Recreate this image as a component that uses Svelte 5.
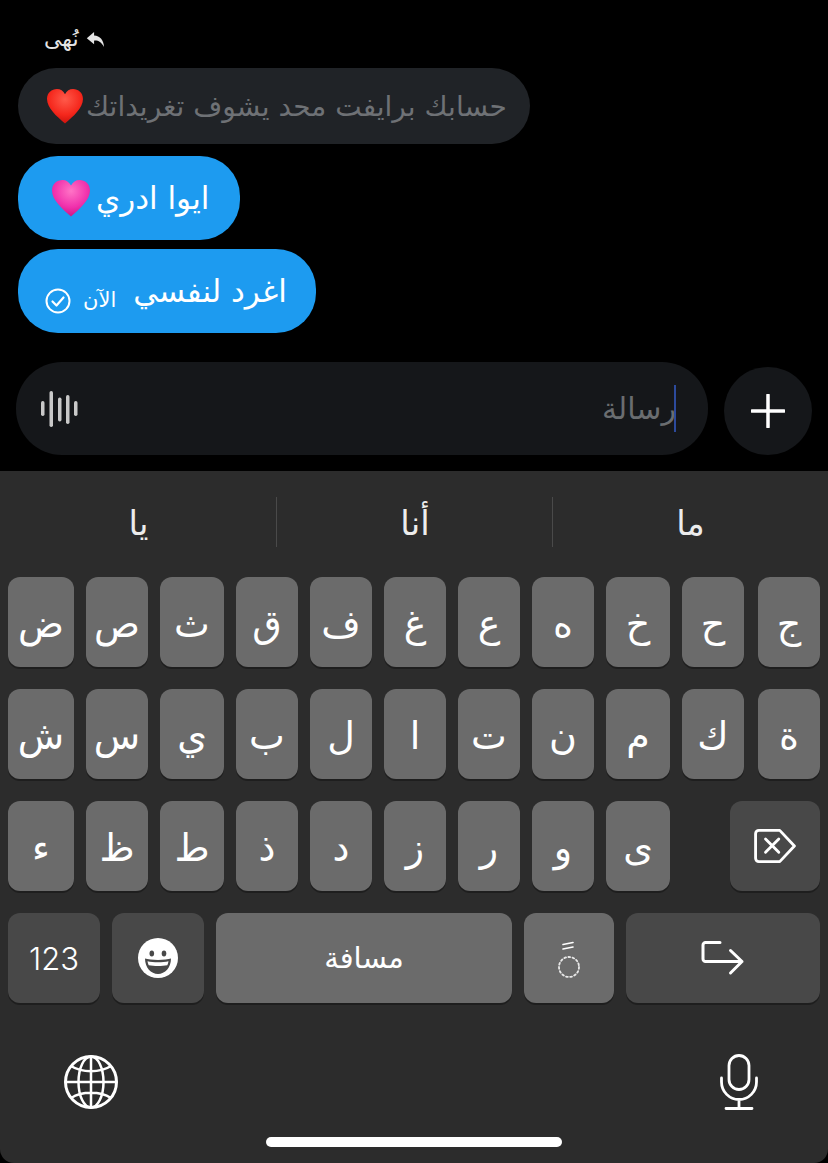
<script>
  const rows = [
    ['ض','ص','ث','ق','ف','غ','ع','ه','خ','ح','ج'],
    ['ش','س','ي','ب','ل','ا','ت','ن','م','ك','ة'],
    ['ء','ظ','ط','ذ','د','ز','ر','و','ى']
  ];
  const suggestions = ['يا','أنا','ما'];
  const heart = 'M20 37.500C11 29.500 1 21 1 11.500 1 5 6 1 11.500 1c3.700 0 6.700 2 8.500 5.500 1.800-3.500 4.800-5.500 8.500-5.500C34 1 39 5 39 11.500 39 21 29 29.500 20 37.500Z';
</script>

<div class="screen">
  <main class="chat">
    <div class="reply-head">
      <span class="reply-name" dir="rtl">نُهى</span>
      <svg class="reply-icon" viewBox="0 0 20 18" width="19" height="17"><path d="M8.500 1 0.800 7.600 8.500 14V10.200c4.500-.3 7.400 1.200 10.500 6.800C18.800 9.600 14.800 4.900 8.500 4.700Z" fill="#e4e4e4"/></svg>
    </div>
    <div class="bubble quoted">
      <svg class="heart" viewBox="0 0 40 38" width="38" height="36">
        <defs><radialGradient id="red" cx="0.5" cy="0.3" r="0.75"><stop offset="0" stop-color="#ff5a4a"/><stop offset="0.6" stop-color="#f5271c"/><stop offset="1" stop-color="#c40e0a"/></radialGradient></defs>
        <path d={heart} fill="url(#red)"/>
      </svg>
      <span dir="rtl">حسابك برايفت محد يشوف تغريداتك</span>
    </div>
    <div class="bubble blue second">
      <svg class="heart" viewBox="0 0 40 38" width="40" height="38">
        <defs><radialGradient id="pink" cx="0.5" cy="0.3" r="0.75"><stop offset="0" stop-color="#ff74c6"/><stop offset="0.6" stop-color="#f030ac"/><stop offset="1" stop-color="#c80f7c"/></radialGradient></defs>
        <path d={heart} fill="url(#pink)"/>
      </svg>
      <span dir="rtl">ايوا ادري</span>
    </div>
    <div class="bubble blue third">
      <svg class="check" viewBox="0 0 26 26" width="26" height="26"><circle cx="13" cy="13" r="11.500" fill="none" stroke="#fff" stroke-width="2"/><path d="M7.500 13.500 11.500 17.500 18.500 9.500" fill="none" stroke="#fff" stroke-width="2.200" stroke-linecap="round" stroke-linejoin="round"/></svg>
      <span class="time" dir="rtl">الآن</span>
      <span dir="rtl">اغرد لنفسي</span>
    </div>
  </main>

  <div class="composer">
    <div class="input">
      <svg class="wave" viewBox="0 0 37 36" width="37" height="36"><g fill="#c9c9c9"><rect x="0" y="10" width="3.500" height="15" rx="1.700"/><rect x="8.500" y="0" width="3.500" height="36" rx="1.700"/><rect x="17" y="6.500" width="3.500" height="24" rx="1.700"/><rect x="25" y="4" width="3.500" height="29" rx="1.700"/><rect x="33" y="10" width="3.500" height="15" rx="1.700"/></g></svg>
      <span class="placeholder" dir="rtl">رسالة</span>
      <span class="caret"></span>
    </div>
    <div class="plus"><svg viewBox="0 0 34 34" width="34" height="34"><path d="M17 1v32M1 17h32" stroke="#fff" stroke-width="3.500" stroke-linecap="round"/></svg></div>
  </div>

  <section class="keyboard">
    <div class="suggestions">
      {#each suggestions as s}
        <div class="suggestion" dir="rtl">{s}</div>
      {/each}
    </div>
    <div class="keys">
      {#each rows as row, r}
        <div class="row letters">
          {#each row as k}
            <div class="key letter">{k}</div>
          {/each}
          {#if r === 2}
            <div class="key dark del">
              <svg viewBox="0 0 46 38" width="44" height="36"><path d="M6 2.500H28L43.500 19 28 35.500H6A3.500 3.500 0 0 1 2.500 32V6A3.500 3.500 0 0 1 6 2.500Z" fill="none" stroke="#fff" stroke-width="3" stroke-linejoin="round"/><path d="M13 11.500 27 25.500M27 11.500 13 25.500" stroke="#fff" stroke-width="3" stroke-linecap="round"/></svg>
            </div>
          {/if}
        </div>
      {/each}
      <div class="row">
        <div class="key dark num">123</div>
        <div class="key dark emoji">
          <svg viewBox="0 0 40 40" width="40" height="40">
            <circle cx="20" cy="20" r="20" fill="#fff"/>
            <ellipse cx="13.800" cy="15.400" rx="2.300" ry="3" fill="#484848"/>
            <ellipse cx="26" cy="15.400" rx="2.300" ry="3" fill="#484848"/>
            <path d="M7 20.600C12 22.500 28 22.500 33 20.600 33 30 27 36 20 36S7 30 7 20.600Z" fill="#484848"/>
            <path d="M9.500 23.300C15 24.600 25 24.600 30.500 23.300 30.300 24.800 29.900 26 29.300 27.200 24 28.300 16 28.300 10.700 27.200 10.100 26 9.700 24.800 9.500 23.300Z" fill="#fff"/>
          </svg>
        </div>
        <div class="key space" dir="rtl">مسافة</div>
        <div class="key tashkeel">
          <svg viewBox="0 0 26 42" width="26" height="42">
            <path d="M7 7.500 17 5.500M7 12 17 10" stroke="#fff" stroke-width="1.600" stroke-linecap="round"/>
            <circle cx="13" cy="30" r="10" fill="none" stroke="#e8e8e8" stroke-width="1.800" stroke-dasharray="1.800 2.400" stroke-linecap="round"/>
          </svg>
        </div>
        <div class="key dark ret">
          <svg viewBox="0 0 44 36" width="44" height="36"><path d="M19 2.500H4.500A2.500 2.500 0 0 0 2 5V19A2.500 2.500 0 0 0 4.500 21.500H41M29.500 10.500 41 21.500 29.500 33" fill="none" stroke="#fff" stroke-width="3" stroke-linecap="round" stroke-linejoin="round"/></svg>
        </div>
      </div>
    </div>
    <div class="bottom">
      <svg viewBox="0 0 54 54" width="54" height="54" fill="none" stroke="#fff" stroke-width="2.500">
        <circle cx="27" cy="27" r="25.500" stroke-width="3"/>
        <ellipse cx="27" cy="27" rx="12.500" ry="25.500"/>
        <path d="M27 1.500V52.500M1.500 27H52.500M7 11C18 18 36 18 47 11M7 43C18 36 36 36 47 43"/>
      </svg>
      <svg class="mic" viewBox="0 0 38 56" width="38" height="56" fill="none" stroke="#fff" stroke-width="2.800" stroke-linecap="round">
        <rect x="9" y="1.500" width="20" height="34" rx="10"/>
        <path d="M1.500 24V28A17.500 17.500 0 0 0 36.500 28V24M19 45.500V54.500M6 54.500H32"/>
      </svg>
    </div>
    <div class="home-bar"></div>
  </section>
</div>

<style>
  :global(body) {
    margin: 0;
    background: #000;
  }
  .screen {
    width: 828px;
    height: 1163px;
    overflow: hidden;
    display: flex;
    flex-direction: column;
    font-family: "DejaVu Sans", "Noto Sans", sans-serif;
    color: #fff;
  }
  .chat {
    height: 333px;
    padding: 0 0 0 18px;
    box-sizing: border-box;
    display: flex;
    flex-direction: column;
    align-items: flex-start;
  }
  .reply-head {
    height: 68px;
    padding-left: 26px;
    padding-top: 24px;
    box-sizing: border-box;
    display: flex;
    align-items: flex-start;
    gap: 7px;
  }
  .reply-name {
    font-size: 22px;
    line-height: 30px;
    color: #e4e4e4;
  }
  .reply-icon {
    margin-top: 7px;
  }
  .bubble {
    display: flex;
    align-items: center;
    box-sizing: border-box;
    border-radius: 40px;
  }
  .quoted {
    width: 512px;
    height: 76px;
    background: #202327;
    color: #6e7175;
    font-size: 28px;
    padding-left: 28px;
    gap: 2px;
    white-space: nowrap;
    overflow: hidden;
  }
  .quoted .heart {
    flex: none;
  }
  .blue {
    background: #1d9bf0;
    font-size: 31px;
    white-space: nowrap;
  }
  .second {
    margin-top: 12px;
    width: 222px;
    height: 84px;
    padding-left: 33px;
    gap: 5px;
  }
  .third {
    margin-top: 9px;
    width: 298px;
    height: 84px;
    padding-left: 27px;
  }
  .check {
    margin-top: 20px;
  }
  .time {
    font-size: 21px;
    margin: 18px 17px 0 12px;
  }
  .composer {
    height: 138px;
    padding: 29px 16px 16px;
    box-sizing: border-box;
    display: flex;
    align-items: flex-end;
    gap: 16px;
  }
  .input {
    flex: 1;
    height: 93px;
    background: #15171a;
    border-radius: 46px;
    padding: 0 32px 0 25px;
    display: flex;
    align-items: center;
    justify-content: space-between;
    position: relative;
  }
  .placeholder {
    font-size: 30px;
    color: #6a6d70;
  }
  .caret {
    position: absolute;
    right: 32px;
    top: 23px;
    width: 2px;
    height: 47px;
    background: #2c4a9c;
  }
  .plus {
    width: 88px;
    height: 88px;
    border-radius: 50%;
    background: #15171a;
    display: flex;
    align-items: center;
    justify-content: center;
  }
  .keyboard {
    flex: 1;
    background: #2c2c2c;
    border-radius: 0 0 14px 14px;
    position: relative;
  }
  .suggestions {
    height: 106px;
    display: grid;
    grid-template-columns: 277px 276px 275px;
    box-sizing: border-box;
  }
  .suggestion {
    display: flex;
    align-items: center;
    justify-content: center;
    font-size: 34px;
    color: #ececec;
    padding-bottom: 3px;
    position: relative;
  }
  .suggestion:not(:last-child)::after {
    content: "";
    position: absolute;
    right: 0;
    top: 26px;
    height: 50px;
    width: 1px;
    background: #4a4a4a;
  }
  .keys {
    display: flex;
    flex-direction: column;
    gap: 22px;
    padding: 0 8px;
  }
  .row {
    display: flex;
    gap: 12px;
    height: 90px;
  }
  .row.letters {
    display: grid;
    grid-template-columns: 66px 62px 64px 62px 62px 62px 62px 62px 64px 62px 64px;
    grid-template-rows: 90px;
  }
  .key {
    flex: 1;
    background: #6b6b6b;
    border-radius: 12px;
    box-shadow: 0 2px 0 #1e1e1e;
    display: flex;
    align-items: center;
    justify-content: center;
    font-size: 38px;
    min-width: 0;
  }
  .letter {
    padding-top: 4px;
    box-sizing: border-box;
  }
  .letters .key:nth-child(11) {
    margin-left: 2px;
  }
  .dark {
    background: #484848;
  }
  .del {
    grid-column: 10 / 12;
    margin-left: 48px;
  }
  .num {
    flex: none;
    width: 92px;
    font-family: "Inter", sans-serif;
    font-size: 31px;
    font-weight: 300;
  }
  .emoji {
    flex: none;
    width: 92px;
  }
  .space {
    flex: none;
    width: 296px;
    font-size: 29px;
  }
  .tashkeel {
    flex: none;
    width: 90px;
  }
  .ret {
    flex: none;
    width: 194px;
  }
  .bottom {
    display: flex;
    justify-content: space-between;
    padding: 51px 70px 0 64px;
    align-items: center;
  }
  .home-bar {
    position: absolute;
    left: 266px;
    top: 666px;
    width: 296px;
    height: 10px;
    border-radius: 5px;
    background: #fff;
  }
</style>
